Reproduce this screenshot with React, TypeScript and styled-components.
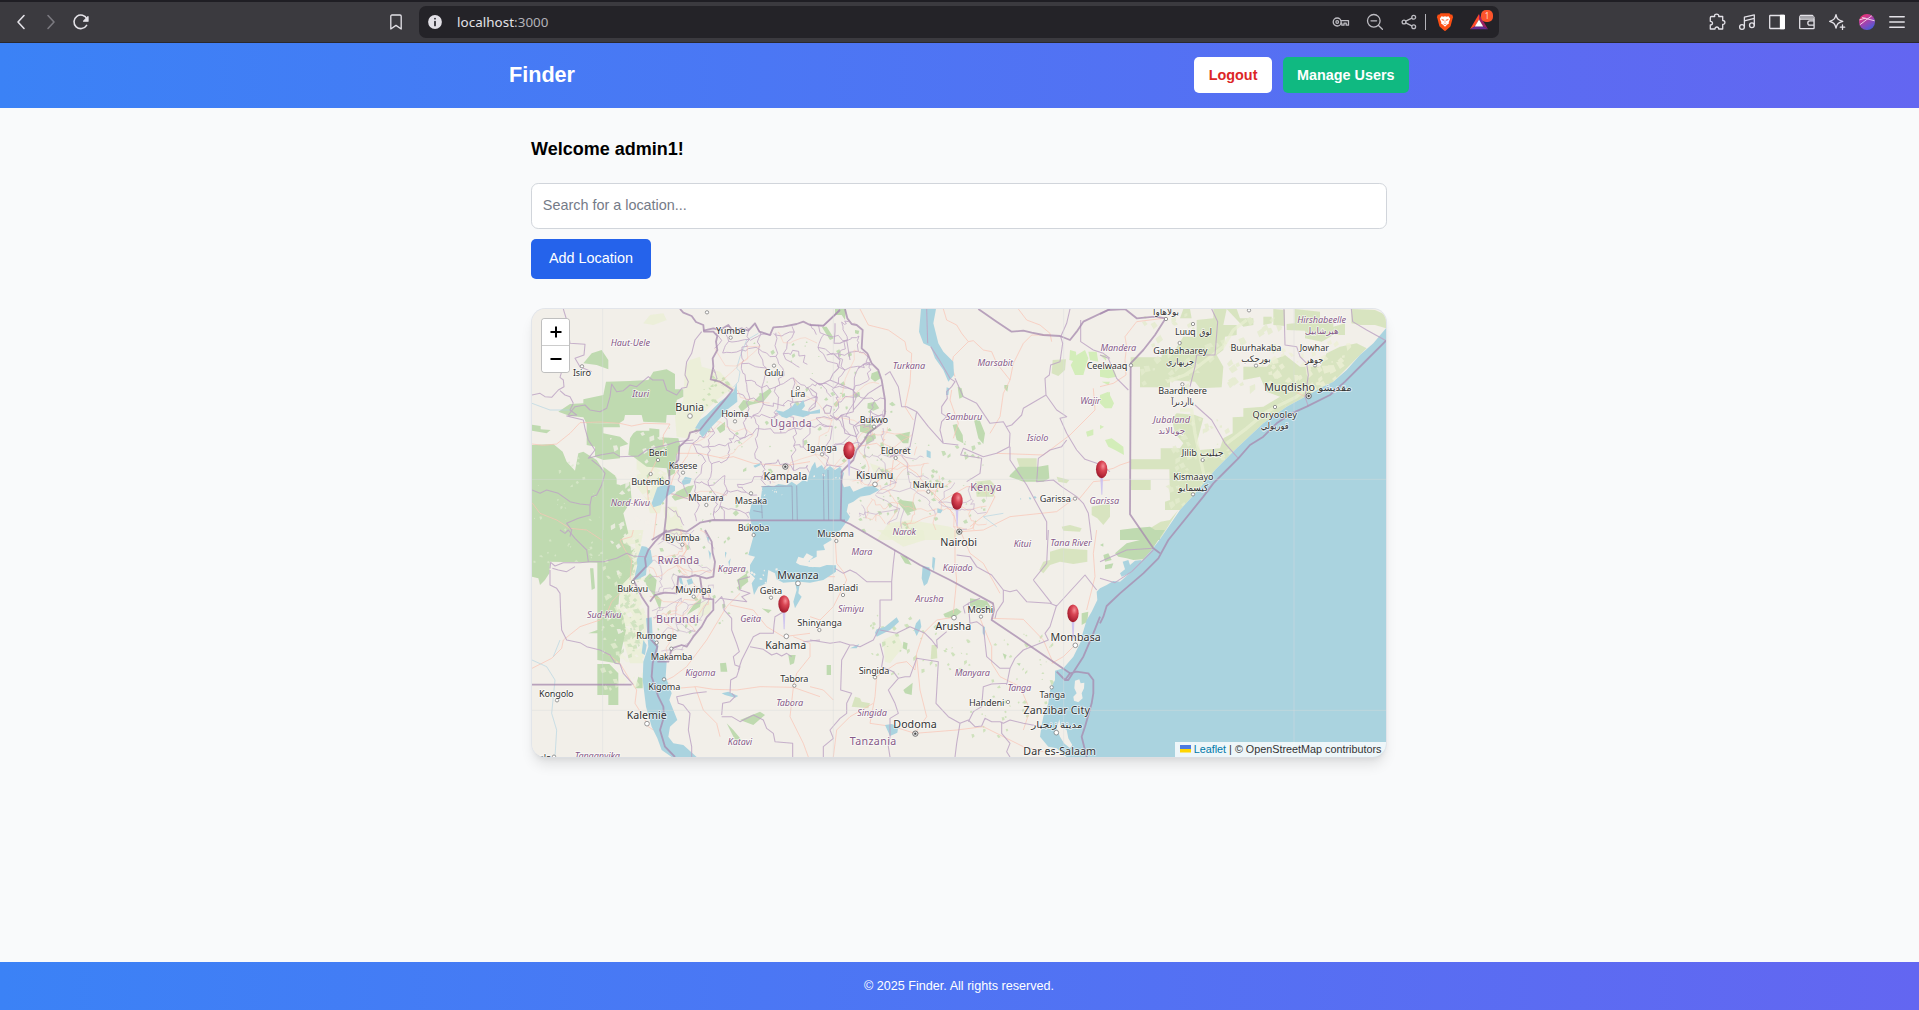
import React from 'react';
import styled, { createGlobalStyle } from 'styled-components';

const GlobalStyle = createGlobalStyle`
  * { box-sizing: border-box; }
  html, body { margin: 0; padding: 0; }
  body { background: #f9fafb; font-family: "Liberation Sans", Arial, sans-serif; font-size: 14.4px; color: #000; overflow: hidden; }
`;

const Screen = styled.div`
  display: flex;
  flex-direction: column;
  height: 100vh;
`;

/* ---------- browser bar ---------- */

const BrowserBar = styled.div`
  flex: none;
  height: 43px;
  display: flex;
  align-items: center;
  background: #3b3a3f;
  border-top: 2px solid #1f1e24;
  border-bottom: 1px solid #29282d;
  padding: 0 12px 0 11px;
`;
const IconGroup = styled.div<{ $width?: number; $end?: boolean }>`
  display: flex;
  align-items: center;
  gap: 10px;
  ${(p) => (p.$width ? `width: ${p.$width}px;` : 'flex: 1;')}
  justify-content: ${(p) => (p.$end ? 'flex-end' : 'flex-start')};
`;
const Glyph = styled.svg<{ $dim?: boolean }>`
  display: block;
  flex: none;
  width: 20px;
  height: 20px;
  fill: none;
  stroke: ${(p) => (p.$dim ? '#7b7a80' : '#e4e2e8')};
  stroke-width: 1.3;
  stroke-linecap: round;
  stroke-linejoin: round;
`;
const AddressBar = styled.div`
  display: flex;
  align-items: center;
  width: 1080px;
  height: 32px;
  margin-left: 13px;
  padding: 0 10px 0 6px;
  border-radius: 7px;
  background: #242328;
`;
const Address = styled.span`
  flex: 1;
  margin-left: 12px;
  font: 13.4px "Noto Sans", "Open Sans", sans-serif;
  letter-spacing: 0.05px;
  color: #e4e3e8;
`;
const Port = styled.span`
  color: #b3b2b8;
`;
const AddressActions = styled.div`
  display: flex;
  align-items: center;
  gap: 14px;
  svg { stroke: #bdbcc2; }
`;
const Divider = styled.span`
  width: 1px;
  height: 16px;
  margin: 0 -5px 0 -8px;
  background: #b4b3b9;
`;
const RewardsButton = styled.span`
  position: relative;
  display: flex;
`;
const RewardsBadge = styled.span`
  position: absolute;
  left: 12px;
  top: -2px;
  width: 12px;
  height: 12px;
  border-radius: 5px;
  background: #fb542b;
  color: #ffd9cc;
  font: 8px/12px "Noto Sans", sans-serif;
  text-align: center;
`;

/* ---------- page ---------- */

const Header = styled.header`
  flex: none;
  height: 65px;
  background: linear-gradient(to right, #3b82f6, #6366f1);
`;
const HeaderInner = styled.div`
  width: 901px;
  height: 100%;
  margin: 0 auto;
  padding: 0 1px 2px 0;
  display: flex;
  align-items: center;
  justify-content: space-between;
`;
const Brand = styled.h1`
  margin: 0;
  font-size: 21.6px;
  font-weight: 700;
  color: #fff;
`;
const HeaderActions = styled.div`
  display: flex;
  gap: 10.8px;
`;
const HeaderButton = styled.button<{ $primary?: boolean }>`
  height: 36px;
  padding: 0 14.4px;
  border: 0;
  border-radius: 5px;
  background: ${(p) => (p.$primary ? '#10b981' : '#fff')};
  color: ${(p) => (p.$primary ? '#fff' : '#dc2626')};
  font: 700 14.4px "Liberation Sans", Arial, sans-serif;
`;
const Main = styled.main`
  flex: 1;
  width: 901px;
  margin: 0 auto;
  padding: 28px 23px 0 22px;
`;
const Welcome = styled.h2`
  margin: 0 0 20px;
  font-size: 18px;
  line-height: 27px;
  font-weight: 700;
`;
const SearchInput = styled.input`
  display: block;
  width: 100%;
  height: 46px;
  padding: 0 10.8px 2px;
  border: 1px solid #d1d5db;
  border-radius: 7.2px;
  background: #fff;
  font: 14.4px "Liberation Sans", Arial, sans-serif;
  &::placeholder { color: #757b87; opacity: 1; }
`;
const AddButton = styled.button`
  display: block;
  width: 120px;
  height: 40px;
  margin: 10px 0 29px;
  padding: 0 0 2px;
  border: 0;
  border-radius: 5px;
  background: #2563eb;
  color: #fff;
  font: 14.4px "Liberation Sans", Arial, sans-serif;
`;
const MapCard = styled.section`
  position: relative;
  height: 450px;
  border: 1px solid #e2e5ea;
  border-bottom-color: #dcdee2;
  border-radius: 14.4px;
  overflow: hidden;
  background: #f2efe9;
  box-shadow: 0 9px 14px -3px rgba(0, 0, 0, 0.11), 0 3px 6px -3px rgba(0, 0, 0, 0.08);
`;
const MapCanvas = styled.svg`
  display: block;
  width: 100%;
  height: 100%;
`;
const ZoomControl = styled.div`
  position: absolute;
  left: 9px;
  top: 9px;
  width: 29px;
  border: 1px solid rgba(0, 0, 0, 0.25);
  border-radius: 4px;
  background: #fff;
  overflow: hidden;
`;
const ZoomButton = styled.button`
  display: block;
  width: 27px;
  height: 26px;
  padding: 0;
  border: 0;
  background: #fff;
  color: #000;
  & + & { border-top: 1px solid #ccc; height: 27px; }
  svg { display: block; margin: auto; stroke: #000; stroke-width: 2; fill: none; }
`;
const Attribution = styled.div`
  position: absolute;
  right: 0;
  bottom: 0;
  display: flex;
  align-items: center;
  height: 15px;
  padding: 0 4.5px 1px;
  background: rgba(255, 255, 255, 0.8);
  color: #333;
  font-size: 10.8px;
  white-space: pre;
  a { color: #0078a8; margin-left: 3px; }
  svg { display: block; }
`;
const Footer = styled.footer`
  flex: none;
  height: 48px;
  display: flex;
  align-items: center;
  justify-content: center;
  padding-right: 1px;
  background: linear-gradient(to right, #3b82f6, #6366f1);
  color: #fff;
  font-size: 12.6px;
`;

/* ---------- map data: six sheets, three units to a pixel ---------- */

type Sheet = 'A' | 'B' | 'C' | 'D' | 'E' | 'F';
const origin: Record<Sheet, [number, number]> = {
  A: [0, 0], B: [870, 0], C: [1740, 0], D: [0, 690], E: [870, 690], F: [1740, 690],
};
type Shape = [Sheet, string];

const forest: Shape[] = [
  ['A', 'M115,335 150,312 190,310 190,298 250,285 258,245 330,243 385,240 400,215 440,208 465,222 465,268 490,268 490,290 470,300 468,345 440,345 438,368 370,365 365,345 315,345 312,360 298,370 200,372 190,352 150,348Z'],
  ['A', 'M200,372 298,370 300,382 250,382 250,400 300,410 325,432 300,440 300,475 250,480 225,470 225,440 200,435Z'],
  ['A', 'M36,435 100,432 128,455 140,485 165,512 175,460 190,455 230,480 250,510 250,560 250,600 250,720 36,720Z'],
  ['A', 'M36,374 62,378 62,388 92,390 80,400 36,392Z M190,190 215,160 245,150 265,180 265,208 230,195Z'],
  ['A', 'M340,400 350,392 388,392 388,385 418,388 418,412 475,415 482,440 468,470 465,520 445,530 440,505 380,500 340,470 325,465 330,415Z'],
  ['A', 'M250,500 290,530 290,560 330,545 335,600 310,640 325,700 300,720 250,720Z M262,545 300,555 300,580 262,575Z'],
  ['A', 'M655,320 670,300 700,305 720,285 750,265 755,275 730,305 690,315 665,335Z M590,385 615,365 615,390 600,400Z M470,575 500,560 522,555 505,590 465,602 455,590Z'],
  ['D', 'M36,0 250,0 300,0 310,40 345,55 330,75 250,98 90,95 88,130 75,150 60,165 55,145 36,140Z'],
  ['D', 'M232,90 320,70 345,100 330,140 300,170 295,230 310,260 318,300 300,380 300,402 232,390 232,310 205,310 232,300Z'],
  ['D', 'M232,402 268,402 295,430 295,525 265,525 265,495 232,495Z M210,115 220,115 225,175 215,180Z M600,400 618,398 622,425 602,425Z M355,440 368,445 368,475 345,475Z'],
  ['D', 'M660,570 720,545 735,555 700,585Z M620,580 640,600 665,630 645,630Z M390,130 410,150 405,190 425,210 420,240 400,195 385,175 370,150Z M650,150 680,130 685,155 660,175Z M520,225 545,205 540,230 500,255Z M725,235 755,240 745,250Z M805,375 827,375 822,400 810,405Z'],
  ['B', 'M75,27 108,27 105,60 95,45 75,45Z M35,80 50,80 72,115 60,120Z M185,220 205,212 212,235 195,245 182,235Z M135,90 148,92 145,103 135,100Z M130,282 148,275 150,288 135,295Z M173,310 195,305 208,325 190,332 172,325Z M150,375 180,372 200,385 175,402 150,395Z M165,412 195,400 198,415 170,435Z'],
  ['B', 'M443,260 455,265 460,290 448,296Z M428,375 440,372 458,405 460,430 440,420Z M492,360 508,358 525,400 520,432 505,415Z M583,255 595,255 592,275 583,265Z M600,525 625,500 685,500 715,495 718,535 700,545 640,545 598,530Z M270,600 310,605 320,630 290,640 265,610Z M255,405 300,395 295,430 280,430Z'],
  ['E', 'M270,75 290,80 305,105 285,100Z M280,335 293,340 290,360 278,355Z M280,480 308,458 305,495 285,490Z M400,252 440,235 455,245 430,265 405,262Z M480,205 530,212 552,245 500,235 480,228Z M815,250 835,245 832,275 815,285Z M578,370 590,375 585,390Z M50,405 63,405 63,435 50,435Z M620,400 632,400 628,408Z'],
  ['F', 'M45,70 80,40 120,30 130,0 195,0 155,60 130,88 100,90 80,85 55,80Z M10,75 25,70 35,90 15,95Z M0,45 10,40 10,50Z M15,105 40,100 35,115 15,118Z'],
  ['C', 'M60,690 100,685 150,680 180,700 180,720 60,720Z'],
];

const savanna: Shape[] = [
  ['B', 'M728,180 768,178 765,210 745,228 725,220Z M620,475 680,475 680,510 630,505Z M740,530 778,540 770,550 745,545Z M845,620 900,610 900,650 880,675 862,655 845,645Z M755,680 780,675 815,685 810,695 760,692Z M495,545 540,540 560,560 550,590 500,590Z'],
  ['E', 'M720,65 755,55 832,60 832,95 790,102 750,95 720,105 700,130 688,120 700,95 720,90Z M135,500 150,505 155,515 180,520 175,535 125,530Z M365,345 380,345 382,385 362,388Z'],
  ['C', 'M92,172 185,172 185,150 225,150 250,110 290,110 290,60 340,55 340,27 380,27 370,75 410,75 410,105 375,110 370,150 350,165 370,200 365,262 300,265 285,245 210,240 210,262 120,262 120,200 92,200Z'],
  ['C', 'M215,355 230,340 285,345 310,355 290,430 300,450 360,445 370,415 398,400 398,352 430,350 430,325 490,320 540,290 560,320 490,370 410,445 345,510 290,575 240,630 195,630 195,605 210,600 208,508 92,508 92,478 182,478 182,445 240,445 250,430 225,400Z'],
  ['C', 'M250,27 270,27 275,55 240,55Z M380,27 410,27 420,55 460,55 460,75 430,80Z M520,27 555,30 555,78 520,75Z M490,50 515,50 515,70 490,75Z M584,27 660,35 660,62 700,62 700,80 735,70 735,105 700,105 665,125 615,115 615,92 560,90 560,72 584,70Z M754,27 825,30 858,45 858,85 825,75 780,75 754,70Z'],
  ['C', 'M430,200 500,200 520,180 555,165 600,200 660,200 680,160 720,140 770,130 800,145 700,245 625,285 560,320 540,290 500,275 480,230 430,240Z M92,540 152,540 152,570 92,570Z M182,665 210,660 235,630 180,718 60,718 60,690 150,685Z'],
];
const lime: Shape[] = [
  ['B', 'M780,150 798,155 800,185 778,180Z M800,165 825,150 835,175 820,225 795,225 782,195Z M835,155 860,155 865,185 840,180Z M870,165 890,165 888,182Z M875,245 900,245 895,255Z M870,300 900,275 900,315 885,322Z M828,395 850,388 850,405 832,410Z'],
  ['C', 'M0,285 25,275 42,310 35,325 15,325 0,310Z M15,420 35,415 70,440 72,465 45,450 25,440Z M0,205 40,205 50,230 25,235 0,230Z M0,375 12,380 0,388Z'],
];
const pale: Shape[] = [
  ['A', 'M510,180 540,170 545,200 600,215 640,262 590,300 545,345 525,385 500,415 470,410 465,350 490,300 495,200Z M390,45 430,40 440,60 400,75 370,70Z'],
  ['A', 'M350,470 400,500 440,520 430,590 420,640 390,640 380,600 350,560Z M430,620 470,620 500,720 440,720Z'],
  ['D', 'M290,0 370,0 360,60 340,150 380,260 370,400 330,400 300,300 300,150Z M540,215 575,215 570,250 530,265Z'],
  ['B', 'M235,670 300,660 420,680 450,700 430,720 200,720Z M180,490 240,510 260,540 200,540Z'],
  ['E', 'M200,0 340,0 345,30 280,50 240,25Z M220,330 260,310 280,350 240,400 225,395Z'],
];
const water: Shape[] = [
  ['A', 'M650,250 652,305 620,330 600,355 575,380 548,412 538,400 540,388 525,385 540,360 560,345 600,305 640,275Z'],
  ['A', 'M412,562 440,552 465,558 465,572 440,590 422,615 400,622 395,610Z M495,530 515,535 510,550 490,555 485,545Z M700,497 720,490 722,495 705,503Z'],
  ['A', 'M765,330 790,335 815,322 825,308 832,318 850,300 855,318 845,330 870,335 900,328 900,340 870,342 850,352 820,345 800,355 785,350Z'],
  ['A', 'M727,560 745,556 760,560 775,552 800,556 815,545 830,555 850,540 862,545 868,520 875,500 885,485 890,505 905,495 915,510 930,498 945,510 960,500 972,520 965,545 972,562 990,558 1000,575 1035,560 1060,558 1078,570 1050,585 1020,590 1000,605 985,612 980,635 990,650 985,660 975,672 962,690 945,700 930,705 935,720 910,735 915,750 890,752 890,770 870,780 865,800 900,802 920,795 948,796 948,815 925,830 910,840 870,848 840,845 835,880 845,890 825,925 820,905 830,870 825,845 790,848 770,838 765,820 745,810 740,850 715,860 702,885 695,850 705,835 690,820 690,795 705,770 685,765 700,710 688,640 695,610 722,600Z'],
  ['D', 'M365,48 378,50 392,60 398,95 380,115 378,135 360,145 342,150 352,105 350,90Z'],
  ['D', 'M378,265 395,262 398,320 415,345 412,375 440,395 437,440 455,490 448,510 472,570 450,590 445,620 460,640 490,645 530,681 455,681 425,660 412,625 395,590 378,530 368,450 370,395 385,350Z M605,490 625,485 655,498 645,503 615,495Z M365,370 370,330 380,345 375,375Z'],
  ['D', 'M475,140 485,145 490,165 480,160Z M500,150 515,145 520,160 505,165Z M565,60 573,70 570,90Z M560,20 568,22 565,35Z M615,65 620,68 615,85Z M625,95 632,85 628,110Z'],
  ['B', 'M333,27 378,27 370,70 385,130 400,155 430,185 432,225 415,245 400,210 375,175 362,140 340,130 327,95Z M410,262 418,265 415,285 408,285Z M350,450 362,455 362,475 350,470Z M382,625 398,630 392,640 382,638Z'],
  ['E', 'M338,108 358,112 362,130 352,160 342,168 335,145Z M195,308 200,298 225,290 260,262 267,275 240,300 200,320Z M318,280 330,266 334,290 320,318 312,300Z M225,585 245,582 265,590 262,608 240,618Z M120,355 148,342 140,355Z M518,290 525,290 525,320 518,310Z M368,80 376,85 372,125 366,110Z'],
  ['A', 'M2598,85 2560,130 2520,165 2480,210 2440,245 2400,265 2365,285 2300,320 2230,370 2150,445 2085,510 2030,575 1980,630 1920,718 1895,750 1868,780 1840,810 1800,845 1780,843 1760,855 1740,865 1730,875 1732,900 1715,935 1700,960 1688,1000 1685,1020 1670,1050 1660,1070 1630,1105 1605,1112 1605,1140 1590,1170 1585,1210 1570,1250 1565,1275 1560,1310 1585,1340 1610,1345 1640,1371 2598,1371Z'],
  ['F', 'M60,130 75,118 68,95 85,90 90,105 105,92 125,90 118,110 90,130 65,140Z'],
];
const islands: Shape[] = [
  ['E', 'M795,452 808,448 812,460 823,458 822,475 815,490 818,505 805,517 792,512 790,500 800,490 793,475Z M748,568 752,590 770,600 775,625 787,645 780,655 762,640 750,620 740,595Z'],
  ['D', 'M835,80 850,85 860,70 880,80 865,95 885,100 880,112 840,105 828,98Z'],
];
const frontiers: Shape[] = [
  ['A', 'M480,27 490,38 515,48 528,66 550,75 552,95 580,95 592,108 588,125 592,150 578,175 580,200 572,238 600,245 615,255 638,270 610,305 560,365 540,390 510,398 505,415 478,440 475,480 448,510 448,550 440,590 438,650 430,720'],
  ['A', 'M550,92 580,85 600,90 625,75 640,95 665,85 685,92 705,70 718,95 735,100 750,105 760,82 790,80 830,72 850,65 870,75 910,77 960,30'],
  ['B', 'M105,27 112,55 125,72 140,75 158,90 155,145 172,160 185,190 205,210 215,240 225,300 225,340 215,370 175,400 160,425 140,450 130,480 95,515 92,660 120,672 330,795 420,840 549,910 552,930 545,960 620,1010 780,1120'],
  ['A', 'M975,661 700,661 580,660 540,668 500,695 470,688 440,695 420,705 395,720'],
  ['B', 'M505,27 560,65 605,95 640,92 665,98 700,105 750,108 780,120 800,95 820,65 900,27'],
  ['C', 'M0,42 25,30 75,27 110,55 165,50 197,55 165,105 130,150 92,190 90,643 160,745 180,760'],
  ['C', 'M858,122 800,180 735,245 690,285 620,320 575,340 530,370 490,410 450,435 415,475 380,510 340,550 310,590 205,720 175,775 130,820 60,880 20,918 10,950 0,970'],
  ['E', 'M870,260 850,310 820,380 775,450 765,450 740,425 M765,450 780,430 800,425 835,430 850,450 850,490 845,520 825,590 815,620 830,681'],
  ['D', 'M440,0 405,35 385,60 375,85 378,110 340,150 350,170 365,200 385,230 385,320 412,350 398,400 395,440 415,500 430,530 432,560 420,600 435,650 465,681'],
  ['D', 'M555,0 575,35 578,70 585,95 580,140 560,145 540,140 525,135 505,142 475,140 470,190 435,188 405,195 390,215 M540,140 545,175 550,205 580,208 580,240 560,262 545,290 520,320 500,350 485,345 455,355 445,395 412,395'],
  ['D', 'M36,464 335,464'],
];
const districts: Shape[] = [
  ['A', 'M130,27 140,60 150,130 195,133 192,165 165,175 180,200 215,215 M36,285 60,280 75,290 95,292 115,270 132,260 130,240 120,232 125,215 130,190 M160,310 150,290 135,285 120,272 M160,310 150,330 170,345 140,348 190,360 195,385 205,420 225,450 205,475 240,465 280,458 300,470 355,468 380,450 415,440 440,435 470,425 520,420 M145,345 165,320 195,315 210,330 240,335 260,325 270,290 275,252 290,275 310,272 330,255 350,260 385,230 398,240 430,240 440,270 470,285 485,265 500,262 505,245 495,225 500,185 515,160 525,120 545,95 M36,570 60,580 80,570 115,580 150,605 180,612 210,615 215,590 230,585 245,555 255,520 240,500 215,480 M210,615 210,645 175,655 140,670 155,690 150,710'],
  ['D', 'M90,115 92,97 105,108 130,98 180,98 210,95 250,95 290,85 320,70 340,78 375,80 M90,120 90,165 110,175 120,190 122,250 125,300 140,330 180,338 200,350 240,360 270,375 285,400 300,402 310,430 340,464 M120,0 135,10 145,0 165,25 180,40 200,60 205,95 M97,115 115,120 140,125 165,110'],
  ['D', 'M585,220 605,200 612,215 612,240 635,265 635,300 650,340 658,365 640,380 645,405 660,410 650,440 632,450 630,490 M605,560 635,560 660,575 700,555 730,570 740,595 760,610 765,635 818,640 818,681 M560,485 520,490 470,500 475,520 490,525 510,550 505,600 515,650 515,681 M635,490 645,500 630,515 608,520 605,555 M690,350 730,358 755,375 770,370 785,378 800,370 815,380 M655,420 665,390 685,350 700,320 720,310 760,310 762,285 765,260 800,240 M690,140 655,150 660,180 690,190 665,200 680,215 600,205 M850,335 900,330'],
  ['B', 'M435,235 460,290 500,310 540,370 580,365 600,400 598,440 560,460 520,470 460,445 452,465 515,475 510,520 470,545 M600,440 600,480 650,555 710,665 710,720 M588,380 605,375 635,345 640,325 708,285 M752,110 758,130 750,185 722,195 718,225 705,235 708,285 740,330 770,350 750,355 770,400 800,450 825,478 860,490 900,515 M770,420 755,440 720,450 685,475 682,520 680,545 730,540 755,560 800,590 820,610 835,640 840,680 845,720 M362,140 385,175 420,235 435,245 425,260 410,275 412,295 395,320 395,340 410,350 395,365 390,390 400,430 M320,335 355,380 400,430 M225,225 240,215 265,260 275,320 290,320 320,335 310,390 300,440 240,470 M780,27 770,70 752,110 M812,60 812,125 850,150 880,160 900,175 M400,430 445,435 M120,500 145,510 160,520 155,545 M350,27 353,130'],
  ['B', 'M0,75 40,78 75,45 90,27 M75,70 75,95 72,130 90,130 110,120 120,180 M50,165 70,160 90,180 85,205 70,220 60,240 30,255 0,235 M60,240 130,270 130,335 M130,335 95,345 80,360 60,345 M130,330 175,280 215,255 M145,205 165,190 185,195 M0,265 20,280 15,320 0,330 M40,325 50,315 65,320 60,340 45,340Z M95,345 105,400 140,410 130,380 155,360 215,345'],
  ['C', 'M0,165 25,175 50,235 85,270 M335,27 353,65 345,165 290,165 285,200 270,260 M285,315 335,360 375,430 415,475 M552,27 555,135 590,140 600,170 620,190 625,225 620,260 615,290 625,320 M754,27 758,65 800,90 858,122'],
  ['E', 'M255,60 250,100 245,155 170,155 140,130 120,120 100,130 75,115 M245,155 245,210 210,210 210,290 190,330 150,350 130,345 120,345 90,335 60,340 0,330 M120,345 95,390 92,480 125,490 110,520 110,550 90,565 60,600 70,625 40,650 40,681 M210,340 220,380 215,410 250,425 265,445 285,440 300,440 320,385 385,395 378,520 415,560 450,580 440,640 435,681 M265,445 235,480 255,520 265,550 240,565 240,620 235,650 240,681 M450,580 475,570 495,590 515,588 525,565 545,575 570,575 580,580 600,570 640,580 695,590 M465,250 460,230 475,220 510,205 M475,220 480,280 500,275 520,290 530,380 570,415 600,415 615,385 640,360 715,330 705,310 720,290 740,225 M600,415 590,465 M580,180 600,185 620,180 650,215 720,220 740,228 825,135 860,180 M670,150 710,100 715,0 M670,150 725,220 M440,75 480,80 500,110 545,135 580,180 580,215 560,245 555,265 M382,355 380,330 410,305 M210,300 260,310 300,290 345,310 365,330 380,350 M475,575 490,545 515,530 520,470 545,462 590,460 M575,575 575,610 600,640 590,665 600,681'],
  ['F', 'M0,95 80,60 160,55 M0,145 45,158 95,125 160,60'],
];
const roads: Shape[] = [
  ['A', 'M36,432 70,436 110,432 150,400 180,368 240,366 300,370 335,378 375,370 450,372 430,405 430,440 M36,608 60,640 110,660 150,685 200,690 245,720 M470,460 540,460 610,475 640,470 700,490 790,498 870,485 M410,480 380,545 385,600 410,640 400,720 M500,470 460,530 445,580'],
  ['B', 'M150,27 175,75 235,90 285,125 290,150 305,160 300,250 285,320 310,360 M400,27 410,60 440,75 455,100 475,125 490,122 520,150 545,155 560,190 600,240 580,280 570,350 540,400 M435,230 425,200 430,170 475,125 M625,27 650,60 690,75 720,100 725,125 M600,240 610,190 640,130 665,105 720,105 M430,415 445,370 420,300 425,270 M560,460 700,465 780,405 810,375 855,330 850,265 M140,440 200,430 225,450 260,480 320,520 350,560 380,590 430,640 445,690 M450,695 520,690 600,650 740,635 800,590 M140,440 120,470 100,490 80,500 60,520 M850,545 805,600 M850,545 900,540 M130,590 200,545 270,490 M250,480 240,560 M400,600 470,560 520,560 555,590 530,640 480,680'],
  ['C', 'M75,180 80,140 75,110 110,65 190,55 M75,180 78,225 40,250 0,260 M590,278 640,300 M0,515 40,505 60,495 90,485'],
  ['D', 'M36,415 95,385 125,355 130,330 180,290 240,270 265,240 275,215 300,190 340,165 M340,0 335,20 300,30 315,60 335,90 330,150 M260,370 300,400 330,450 350,480 345,520 370,560 385,590 400,600 M440,450 460,440 500,410 560,330 620,230 660,190 M430,450 470,475 530,470 580,478 650,480 720,470 820,472 900,500 M820,472 810,560 850,640 865,681 M820,470 830,430 870,380 870,340 820,320 M525,470 550,540 590,580 600,620 M630,225 700,240 740,290 790,320 870,310 M480,0 500,60 470,100 500,130'],
  ['E', 'M75,15 80,100 100,125 110,150 70,230 30,270 0,260 M435,0 435,100 440,150 430,250 M430,262 380,270 340,310 320,370 315,420 290,395 260,400 200,440 195,500 180,580 250,590 315,610 440,600 520,590 640,650 700,665 M320,380 330,480 350,560 315,610 M190,520 120,560 80,600 70,681 M510,265 545,350 545,400 570,440 630,470 660,540 640,600 M545,265 640,268 700,330 730,400 M450,0 480,70 520,100 570,190 M795,345 760,380 725,400 M860,0 850,70 855,140 830,240 M0,470 40,480 70,510 M0,140 75,140'],
];
const streams: Shape[] = [
  ['A', 'M715,100 680,120 660,170 650,205 660,215 655,245 640,262 M36,310 90,330 150,330'],
  ['D', 'M36,390 80,410 105,450 95,550 110,600 105,681 M100,380 120,330'],
  ['B', 'M560,680 520,650 580,640'],
];

/* Small deterministic generator used for the fine district mesh and vegetation specks. */
const seeded = (seed: number) => () => {
  seed = (seed * 16807) % 2147483647;
  return seed / 2147483647;
};
function mesh(x: number, y: number, w: number, h: number, step: number, seed: number, skip = 0.25) {
  const rnd = seeded(seed);
  const cols = Math.ceil(w / step);
  const rows = Math.ceil(h / step);
  const pts: number[][][] = [];
  for (let r = 0; r <= rows; r++) {
    pts.push([]);
    for (let c = 0; c <= cols; c++) {
      const stagger = r % 2 ? step / 2 : 0;
      pts[r].push([x + stagger + c * step + (rnd() - 0.5) * step * 0.8, y + r * step + (rnd() - 0.5) * step * 0.8]);
    }
  }
  let d = '';
  const join = (a: number[], b: number[]) => {
    if (rnd() < skip) return;
    d += `M${a[0].toFixed(0)},${a[1].toFixed(0)}`;
    for (let t = 1; t < 4; t++) {
      const px = a[0] + ((b[0] - a[0]) * t) / 4 + (rnd() - 0.5) * step * 0.3;
      const py = a[1] + ((b[1] - a[1]) * t) / 4 + (rnd() - 0.5) * step * 0.3;
      d += ` ${px.toFixed(0)},${py.toFixed(0)}`;
    }
    d += ` ${b[0].toFixed(0)},${b[1].toFixed(0)}`;
  };
  for (let r = 0; r <= rows; r++) {
    for (let c = 0; c <= cols; c++) {
      if (c < cols) join(pts[r][c], pts[r][c + 1]);
      if (r < rows) join(pts[r][c], pts[r + 1][c]);
    }
  }
  return d;
}
function specks(x: number, y: number, w: number, h: number, n: number, size: number, seed: number) {
  const rnd = seeded(seed);
  let d = '';
  for (let i = 0; i < n; i++) {
    const cx = x + rnd() * w;
    const cy = y + rnd() * h;
    const s = size * (0.3 + rnd());
    d += `M${cx.toFixed(0)},${cy.toFixed(0)}l${s.toFixed(0)},${(-s * rnd()).toFixed(0)} ${(s * rnd()).toFixed(0)},${s.toFixed(0)} ${(-s).toFixed(0)},${(s * rnd()).toFixed(0)}z`;
  }
  return d;
}

type Kind = 'town' | 'city' | 'region' | 'country' | 'arabic' | 'regionArabic';
type Label = [Sheet, Kind, string, number, number, number];
const labels: Label[] = [
  ['A', 'town', 'Yumbe', 632, 102, 88], ['A', 'region', 'Haut-Uele', 331, 138, 118], ['A', 'town', 'Isiro', 186, 227, 54],
  ['A', 'region', 'Ituri', 362, 290, 51], ['A', 'city', 'Bunia', 509, 333, 86], ['A', 'town', 'Gulu', 762, 229, 58],
  ['A', 'town', 'Lira', 834, 292, 45], ['A', 'town', 'Hoima', 645, 352, 83], ['A', 'country', 'Uganda', 813, 382, 124],
  ['A', 'town', 'Beni', 414, 467, 55], ['A', 'town', 'Kasese', 489, 506, 86], ['A', 'town', 'Butembo', 392, 555, 116],
  ['A', 'city', 'Kampala', 796, 541, 131], ['A', 'region', 'Nord-Kivu', 331, 617, 118], ['A', 'town', 'Mbarara', 558, 604, 106],
  ['A', 'town', 'Masaka', 693, 611, 97], ['A', 'town', 'Bukoba', 701, 692, 95], ['B', 'town', 'Iganga', 36, 452, 90],
  ['B', 'region', 'Turkana', 297, 208, 97], ['B', 'region', 'Marsabit', 556, 197, 107], ['B', 'town', 'Bukwo', 192, 369, 85],
  ['B', 'region', 'Samburu', 462, 359, 110], ['B', 'region', 'Isiolo', 683, 424, 64], ['B', 'town', 'Eldoret', 257, 463, 90],
  ['B', 'city', 'Kisumu', 194, 537, 112], ['B', 'town', 'Nakuru', 355, 563, 94], ['B', 'country', 'Kenya', 528, 573, 95],
  ['B', 'town', 'Garissa', 736, 605, 93], ['B', 'region', 'Garissa', 883, 613, 89], ['B', 'region', 'Wajir', 841, 312, 61],
  ['B', 'region', 'Narok', 283, 705, 71], ['B', 'town', 'Musoma', 77, 712, 110], ['B', 'town', 'Ceelwaaq', 891, 206, 122],
  ['B', 'region', 'Mandera', 925, 152, 107],
  ['C', 'arabic', 'بولاهاوا', 198, 46, 78], ['C', 'town', 'Luuq', 256, 104, 62], ['C', 'arabic', 'لوق', 317, 104, 38],
  ['C', 'town', 'Garbahaarey', 241, 162, 163], ['C', 'arabic', 'جربهاري', 240, 194, 84],
  ['C', 'town', 'Buurhakaba', 468, 152, 153], ['C', 'arabic', 'بورحكب', 468, 187, 88],
  ['C', 'town', 'Jowhar', 643, 154, 88], ['C', 'arabic', 'جوهر', 643, 188, 54],
  ['C', 'region', 'Hirshabeelle', 665, 68, 147], ['C', 'regionArabic', 'هيرشابيل', 665, 102, 102],
  ['C', 'city', 'Muqdisho', 569, 272, 152], ['C', 'arabic', 'مقديشو', 705, 272, 101],
  ['C', 'town', 'Baardheere', 248, 283, 146], ['C', 'arabic', 'بااَردىرآ', 248, 315, 68],
  ['C', 'region', 'Jubaland', 215, 369, 110], ['C', 'regionArabic', 'جوبالاند', 215, 401, 80],
  ['C', 'town', 'Qoryooley', 524, 354, 133], ['C', 'arabic', 'قوريولي', 524, 387, 84],
  ['C', 'town', 'Jilib', 268, 467, 45], ['C', 'arabic', 'جيليب', 335, 467, 72],
  ['C', 'town', 'Kismaayo', 280, 540, 121], ['C', 'arabic', 'كيسمايو', 280, 573, 90],
  ['D', 'town', 'Byumba', 487, 33, 104], ['D', 'country', 'Rwanda', 475, 101, 125], ['D', 'region', 'Kagera', 635, 127, 84],
  ['D', 'town', 'Bukavu', 338, 187, 93], ['D', 'town', 'Muyinga', 520, 188, 109], ['D', 'town', 'Geita', 753, 191, 67],
  ['D', 'city', 'Mwanza', 834, 146, 124], ['D', 'region', 'Sud-Kivu', 253, 265, 104], ['D', 'country', 'Burundi', 472, 278, 128],
  ['D', 'region', 'Geita', 692, 277, 62], ['D', 'town', 'Rumonge', 410, 327, 122], ['D', 'city', 'Kahama', 797, 357, 123],
  ['D', 'town', 'Makamba', 455, 389, 125], ['D', 'region', 'Kigoma', 541, 437, 90], ['D', 'town', 'Kigoma', 433, 480, 96],
  ['D', 'town', 'Tabora', 823, 455, 85], ['D', 'region', 'Tabora', 809, 527, 81], ['D', 'town', 'Kongolo', 109, 501, 104],
  ['D', 'city', 'Kalemie', 380, 568, 120], ['D', 'region', 'Katavi', 660, 644, 73], ['D', 'region', 'Tanganyika', 232, 687, 136],
  ['D', 'town', 'Kabalo', 52, 694, 84],
  ['E', 'region', 'Mara', 156, 76, 63], ['E', 'town', 'Bariadi', 99, 183, 90], ['E', 'region', 'Simiyu', 123, 245, 78],
  ['E', 'town', 'Shinyanga', 29, 288, 134], ['E', 'city', 'Nairobi', 446, 48, 110], ['E', 'region', 'Kajiado', 443, 123, 90],
  ['E', 'region', 'Kitui', 637, 50, 52], ['E', 'region', 'Tana River', 783, 47, 124], ['E', 'region', 'Arusha', 358, 217, 84],
  ['E', 'town', 'Moshi', 511, 249, 77], ['E', 'city', 'Arusha', 430, 300, 107], ['E', 'city', 'Mombasa', 797, 334, 151],
  ['E', 'town', 'Singida', 192, 431, 92], ['E', 'region', 'Manyara', 487, 438, 106], ['E', 'region', 'Tanga', 628, 482, 71],
  ['E', 'town', 'Tanga', 727, 504, 77], ['E', 'town', 'Handeni', 530, 527, 106], ['E', 'region', 'Singida', 186, 558, 89],
  ['E', 'city', 'Dodoma', 315, 594, 130], ['E', 'country', 'Tanzania', 189, 645, 140], ['E', 'city', 'Zanzibar City', 740, 553, 199],
  ['E', 'arabic', 'مدينة زنجبار', 741, 595, 154], ['E', 'city', 'Dar es-Salaam', 749, 675, 218],
];
const dots: [Sheet, number, number, number][] = [
  ['A', 561, 37, 5], ['A', 632, 113, 5], ['A', 186, 199, 5], ['A', 510, 348, 7], ['A', 762, 197, 5], ['A', 834, 264, 5],
  ['A', 645, 364, 5], ['A', 414, 480, 5], ['A', 489, 518, 5], ['A', 392, 522, 5], ['A', 559, 615, 5], ['A', 693, 580, 5],
  ['A', 701, 705, 5], ['B', 36, 463, 5], ['B', 192, 380, 5], ['B', 257, 474, 5], ['B', 195, 553, 7], ['B', 355, 575, 5],
  ['B', 795, 596, 5], ['B', 79, 723, 5], ['C', 93, 196, 5], ['C', 198, 57, 5], ['C', 279, 72, 5], ['C', 239, 129, 5], ['C', 447, 31, 5],
  ['C', 468, 197, 5], ['C', 645, 196, 5], ['C', 247, 253, 5], ['C', 525, 321, 5], ['C', 308, 480, 5], ['C', 279, 583, 5],
  ['D', 487, 44, 5], ['D', 339, 156, 5], ['D', 521, 200, 5], ['D', 753, 203, 5], ['D', 834, 160, 7], ['D', 799, 319, 7],
  ['D', 410, 338, 5], ['D', 454, 356, 5], ['D', 432, 448, 5], ['D', 823, 467, 5], ['D', 111, 511, 5], ['D', 381, 581, 7],
  ['D', 102, 680, 5], ['E', 99, 195, 5], ['E', 28, 300, 5], ['E', 432, 263, 7], ['E', 513, 260, 5], ['E', 796, 346, 7], ['E', 195, 442, 5],
  ['E', 725, 472, 5], ['E', 594, 516, 5], ['E', 739, 608, 7],
];
const capitals: [Sheet, number, number][] = [['A', 796, 500], ['B', 448, 695], ['C', 626, 288], ['E', 316, 611]];
const markers: [number, number][] = [[987, 451], [1311, 603], [1745, 508], [792, 912], [1659, 940]];

const Area = styled.path<{ $fill: string; $alpha?: number }>`
  fill: ${(p) => p.$fill};
  opacity: ${(p) => p.$alpha ?? 1};
`;
const Line = styled.path<{ $color: string; $w: number; $alpha?: number }>`
  fill: none;
  stroke: ${(p) => p.$color};
  stroke-width: ${(p) => p.$w};
  stroke-linejoin: round;
  opacity: ${(p) => p.$alpha ?? 1};
`;
const fontSizes: Record<Kind, number> = { town: 27.5, city: 32, region: 27.5, country: 32, arabic: 27, regionArabic: 26 };
const PlaceName = styled.text<{ $kind: Kind }>`
  font-family: "Noto Sans", "DejaVu Sans", sans-serif;
  font-size: ${(p) => fontSizes[p.$kind]}px;
  font-style: ${(p) => (p.$kind === 'region' ? 'italic' : 'normal')};
  fill: ${(p) => (p.$kind === 'region' || p.$kind === 'country' || p.$kind === 'regionArabic' ? '#865a89' : '#333')};
  stroke: rgba(255, 255, 255, 0.65);
  stroke-width: 5px;
  stroke-linejoin: round;
  paint-order: stroke;
  text-anchor: middle;
`;

const shift = (s: Sheet) => `translate(${origin[s][0]} ${origin[s][1]})`;
const Areas = ({ items, fill, alpha }: { items: Shape[]; fill: string; alpha?: number }) => (
  <>{items.map(([s, d], i) => <Area key={i} transform={shift(s)} d={d} $fill={fill} $alpha={alpha} />)}</>
);
const Lines = ({ items, color, w, alpha }: { items: Shape[]; color: string; w: number; alpha?: number }) => (
  <>{items.map(([s, d], i) => <Line key={i} transform={shift(s)} d={d} $color={color} $w={w} $alpha={alpha} />)}</>
);

const EastAfricaMap = () => (
  <MapCanvas viewBox="36 27 2562 1344" preserveAspectRatio="none">
    <defs>
      <radialGradient id="balloon" cx="0.62" cy="0.32" r="0.75">
        <stop offset="0" stopColor="#f58f97" />
        <stop offset="0.35" stopColor="#d94654" />
        <stop offset="0.8" stopColor="#ae2234" />
        <stop offset="1" stopColor="#8d1a28" />
      </radialGradient>
      <clipPath id="uganda">
        <path d="M588,100 705,75 750,105 850,65 910,77 975,35 1025,90 1055,190 1095,300 1085,370 1010,450 965,500 860,520 720,560 690,655 540,660 450,690 440,590 475,440 540,390 650,280 575,240Z" />
      </clipPath>
      <clipPath id="rwandaBurundi">
        <path d="M440,690 555,690 585,750 580,900 500,1040 445,1085 415,1040 390,900 385,780Z" />
      </clipPath>
      <clipPath id="westKenya">
        <path d="M1060,390 1160,370 1200,460 1270,540 1400,570 1400,690 1280,690 1160,690 985,640 1060,590 1078,570 985,540 990,450Z" />
      </clipPath>
    </defs>
    <rect x="36" y="27" width="2562" height="1344" fill="#f2efe9" />
    <Areas items={pale} fill="#e9efd3" alpha={0.75} />
    <Areas items={savanna} fill="#d4e2b9" alpha={0.85} />
    <Areas items={lime} fill="#d3edb9" />
    <Areas items={forest} fill="#bfdab0" />
    <Area d={specks(270, 400, 180, 720, 110, 11, 11)} $fill="#f2efe9" $alpha={0.8} />
    <Area d={specks(240, 780, 130, 400, 60, 11, 29)} $fill="#eef1db" $alpha={0.6} />
    <Area d={specks(300, 720, 60, 350, 70, 11, 37)} $fill="#bfdab0" $alpha={0.6} />
    <Area d={specks(40, 470, 200, 340, 40, 6, 83)} $fill="#dce9cd" $alpha={0.7} />
    <Area d={specks(380, 380, 300, 620, 70, 8, 17)} $fill="#bfdab0" $alpha={0.9} />
    <Area d={specks(545, 220, 80, 120, 24, 8, 43)} $fill="#c9dfb5" $alpha={0.9} />
    <Area d={specks(700, 120, 420, 400, 46, 8, 23)} $fill="#bfdab0" $alpha={0.9} />
    <Area d={specks(1000, 420, 400, 270, 100, 8, 31)} $fill="#bfdab0" $alpha={0.85} />
    <Area d={specks(1050, 940, 300, 200, 50, 8, 47)} $fill="#c9dfb5" $alpha={0.85} />
    <Area d={specks(1350, 1000, 250, 330, 45, 7, 51)} $fill="#c9dfb5" $alpha={0.85} />
    <Area d={specks(1860, 40, 420, 220, 60, 13, 59)} $fill="#e3ebcd" $alpha={0.8} />
    <Area d={specks(1930, 350, 200, 270, 60, 12, 61)} $fill="#e3ebcd" $alpha={0.8} />
    <Area d={specks(2240, 120, 240, 160, 50, 14, 67)} $fill="#ecefd4" $alpha={0.8} />
    <Lines items={[['C', 'M200,245 255,225 300,195 370,140 400,90 440,60 M240,330 275,330 285,400 300,470 315,540 M380,430 440,385 500,335 590,290 640,250']]} color="#e9efd3" w={10} alpha={0.7} />
    <Lines items={roads} color="#fac4b5" w={2.4} alpha={0.9} />
    <g clipPath="url(#westKenya)">
      <Line d={mesh(960, 340, 500, 360, 54, 7, 0.35)} $color="#fac4b5" $w={2.2} $alpha={0.8} />
      <Line d={mesh(960, 340, 500, 360, 62, 91, 0.3)} $color="#c5aecb" $w={2.4} $alpha={0.8} />
    </g>
    <Lines items={streams} color="#b3d5e2" w={2.5} alpha={0.8} />
    <g clipPath="url(#uganda)">
      <Line d={mesh(420, 60, 680, 620, 48, 5)} $color="#c3aac9" $w={3} $alpha={0.85} />
      <Line d={mesh(420, 60, 680, 620, 110, 57, 0.4)} $color="#fac4b5" $w={2} $alpha={0.7} />
    </g>
    <g clipPath="url(#rwandaBurundi)">
      <Line d={mesh(360, 690, 250, 400, 44, 13, 0.35)} $color="#c5aecb" $w={2.4} $alpha={0.75} />
      <Line d={mesh(360, 690, 250, 400, 66, 19, 0.35)} $color="#fac4b5" $w={2.2} $alpha={0.8} />
    </g>
    <Areas items={water} fill="#aad3df" />
    <Areas items={islands} fill="#f2efe9" />
    <Area d={specks(690, 800, 120, 50, 9, 6, 71)} $fill="#f2efe9" />
    <Area d={specks(725, 568, 60, 26, 9, 5, 77)} $fill="#f2efe9" />
    <Area d={specks(880, 515, 90, 30, 7, 5, 79)} $fill="#f2efe9" />
    <Area d={specks(1500, 560, 60, 60, 3, 4, 73)} $fill="#aad3df" />
    <Lines items={[['A', 'M727,655 724,598 M724,560 816,558 818,661 M832,661 830,557 M910,520 912,661 M924,510 926,661 M727,637 700,632']]} color="#9ba3bd" w={3} alpha={0.8} />
    <Lines items={districts} color="#bda5c4" w={3.2} alpha={0.85} />
    <Lines items={frontiers} color="#a88cb0" w={5.5} alpha={0.78} />
    <Line d="M248,27V1371 M940,27V1371 M1631,27V1371 M2322,27V1371 M36,538H2598 M36,1231H2598" $color="#d9dadd" $w={2.4} $alpha={0.55} />
    {dots.map(([s, x, y, r], i) => (
      <circle key={i} transform={shift(s)} cx={x} cy={y} r={r} fill="#fff" stroke="#777" strokeWidth="2.2" />
    ))}
    {capitals.map(([s, x, y], i) => (
      <g key={i} transform={shift(s)}>
        <circle cx={x} cy={y} r="8" fill="#eee" stroke="#555" strokeWidth="2.4" />
        <circle cx={x} cy={y} r="3.5" fill="#444" />
      </g>
    ))}
    {labels.map(([s, kind, name, x, y, w], i) => (
      <PlaceName key={i} $kind={kind} x={x + origin[s][0]} y={y + origin[s][1]} textLength={w} lengthAdjust={kind === 'arabic' || kind === 'regionArabic' ? 'spacingAndGlyphs' : 'spacing'}>
        {name}
      </PlaceName>
    ))}
    {markers.map(([x, y], i) => (
      <g key={i}>
        <path d={`M${x - 4},${y + 26}h8l-2,50h-3z`} fill="#c9bdf0" opacity="0.85" />
        <ellipse cx={x} cy={y} rx="17" ry="26.5" fill="url(#balloon)" />
      </g>
    ))}
  </MapCanvas>
);

const Chrome = () => (
  <BrowserBar>
    <IconGroup $width={375}>
      <Glyph viewBox="0 0 20 20"><path strokeWidth="1.6" d="M13 3.5 7 10l6 6.5" /></Glyph>
      <Glyph viewBox="0 0 20 20" $dim><path strokeWidth="1.6" d="m7 3.5 6 6.5-6 6.5" /></Glyph>
      <Glyph viewBox="0 0 20 20"><path strokeWidth="1.6" d="M15.6 13.4A6.8 6.8 0 1 1 16 7" /><path d="M17 4.6v4.6h-4.4Z" fill="#e4e2e8" /></Glyph>
    </IconGroup>
    <Glyph viewBox="0 0 20 20"><path d="M4.8 4.2c0-.7.5-1.2 1.2-1.2h8c.7 0 1.2.5 1.2 1.2V17L10 13.4 4.8 17Z" /></Glyph>
    <AddressBar>
      <Glyph viewBox="0 0 20 20"><circle cx="10" cy="10" r="6.9" fill="#e2e0e6" stroke="none" /><path d="M10 9.5v4M10 6.5v.2" stroke="#242328" strokeWidth="1.7" /></Glyph>
      <Address>localhost<Port>:3000</Port></Address>
      <AddressActions>
        <Glyph viewBox="0 0 20 20"><circle cx="6.2" cy="10" r="4" /><circle cx="6.2" cy="10" r="1.3" /><path d="M9.9 8.6H17.5v4.6h-2.3v-2H13v2h-2.2v-2h-.9" /></Glyph>
        <Glyph viewBox="0 0 20 20"><circle cx="8.8" cy="8.8" r="6.3" /><path d="M6 8.8h5.6M13.5 13.5 17.4 17.3" /></Glyph>
        <Glyph viewBox="0 0 20 20"><circle cx="5" cy="10" r="1.9" /><circle cx="14.7" cy="5.3" r="1.9" /><circle cx="14.7" cy="14.7" r="1.9" /><path d="m6.8 9.2 6-3M6.8 10.800l6 3" /></Glyph>
        <Divider />
        <Glyph viewBox="0 0 20 20">
          <path d="M5.6 1.200h8.800l1.500 1.600 1.300-.2.9 2.700-.5 1.200-1.900 7.200c-.2.8-.7 1.400-1.400 1.900L10.600 18.700a1 1 0 0 1-1.200 0l-3.700-3.100c-.7-.5-1.200-1.100-1.400-1.900L2.400 6.500l-.5-1.200.9-2.700 1.300.2Z" fill="#fb4f14" stroke="none" />
          <path d="m6.500 4.300 2 .4L10 4.300l1.500.4 2-.4 1.700 2.500-1.500 3.400.2 1.200L12 12.800l-2 1.900-2-1.900-1.900-1.400.2-1.200-1.500-3.400Z" fill="#fff" stroke="none" />
          <path d="m7 7.300 1.800.6-.5.600ZM13 7.300l-1.800.6.5.600ZM10 8.500v2M8.800 12l1.200.6 1.200-.6" fill="#fb4f14" stroke="#fb4f14" strokeWidth="0.5" />
        </Glyph>
        <RewardsButton>
          <Glyph viewBox="0 0 20 20">
            <path d="M10 2 1 17.300l5-2.700 4-7Z" fill="#ff4b2b" stroke="none" />
            <path d="M10 2l9 15.300-5-2.700-4-7Z" fill="#9e1f63" stroke="none" />
            <path d="M1 17.300h18l-5-3H6Z" fill="#662d91" stroke="none" />
            <path d="m10 7.600 4.200 6.800H5.800Z" fill="#fff" stroke="none" />
          </Glyph>
          <RewardsBadge>1</RewardsBadge>
        </RewardsButton>
      </AddressActions>
    </AddressBar>
    <IconGroup $end>
      <Glyph viewBox="0 0 20 20"><path d="M4.500 4.500h3.200c-.5-2 .8-2.300 2-2.300s2.500.5 2 2.300h4v4c2 .0 2.200 1 2.200 2s-.7 2-2.200 1.800V17h-4c0-1.500-.8-2-1.800-2s-1.900.5-1.900 2H3.300v-4c1.600 0 2.200-.8 2.200-1.800s-.7-1.900-2.200-1.900V5.700c0-.7.500-1.200 1.200-1.200Z" /></Glyph>
      <Glyph viewBox="0 0 20 20"><circle cx="5" cy="15" r="2.4" /><circle cx="14.900" cy="13.200" r="2.4" /><path d="M7.400 15V5.200l9.900-2.400v10.400M7.400 8.800l9.900-2.400" /></Glyph>
      <Glyph viewBox="0 0 20 20"><rect x="2.7" y="3.5" width="14.6" height="13" rx=".5" /><path d="M13.500 3.500h3.800v13h-3.800Z" fill="#fff" stroke="#fff" /></Glyph>
      <Glyph viewBox="0 0 20 20"><path d="M17 7V5.500L15.400 3.500H3.500L2.700 5v11c0 .4.300.7.700.7h13c.4 0 .7-.3.7-.7V7H3.500M17 8.900h-4.300c-2.500 0-2.500 4.300 0 4.300H17Z" /><path d="M4 5.200h12" stroke="#a5a4aa" strokeWidth="2.4" /></Glyph>
      <Glyph viewBox="0 0 20 20"><path d="M9 2.700c.8 4 1.800 5.400 6.800 6.600-4.500 1.200-5.800 2.300-6.800 6.800-1-4.500-2.300-5.600-6.400-6.800C6.800 8.100 8 7 9 2.700ZM15.500 13v4.400M13.300 15.200h4.400" /></Glyph>
      <Glyph viewBox="0 0 20 20">
        <defs><linearGradient id="avatar" x1="0.2" y1="0" x2="0.8" y2="1"><stop offset="0" stopColor="#f5306d" /><stop offset="0.5" stopColor="#a044b0" /><stop offset="1" stopColor="#3b5fe0" /></linearGradient></defs>
        <circle cx="10" cy="10" r="8" fill="url(#avatar)" stroke="none" />
        <path d="M3.200 12.500 10 7.300 14.500 4M5.500 5.600 17.200 8.700M2.800 7.800 8 6.200" stroke="#f7d9ee" strokeWidth="0.9" />
      </Glyph>
      <Glyph viewBox="0 0 20 20"><path strokeWidth="1.5" d="M2.800 4.800h14.400M2.800 10h14.400M2.800 15.200h14.400" /></Glyph>
    </IconGroup>
  </BrowserBar>
);

export default function App() {
  return (
    <Screen>
      <GlobalStyle />
      <Chrome />
      <Header>
        <HeaderInner>
          <Brand>Finder</Brand>
          <HeaderActions>
            <HeaderButton>Logout</HeaderButton>
            <HeaderButton $primary>Manage Users</HeaderButton>
          </HeaderActions>
        </HeaderInner>
      </Header>
      <Main>
        <Welcome>Welcome admin1!</Welcome>
        <SearchInput placeholder="Search for a location..." />
        <AddButton>Add Location</AddButton>
        <MapCard>
          <EastAfricaMap />
          <ZoomControl>
            <ZoomButton aria-label="Zoom in"><svg width="12" height="12"><path d="M6 .5v11M.5 6h11" /></svg></ZoomButton>
            <ZoomButton aria-label="Zoom out"><svg width="12" height="12"><path d="M.5 6h11" /></svg></ZoomButton>
          </ZoomControl>
          <Attribution>
            <svg width="11" height="8"><path d="M0 0h11v4H0Z" fill="#4c7be1" /><path d="M0 4h11v3.500H0Z" fill="#ffd500" /></svg>
            <a>Leaflet</a> | © OpenStreetMap contributors
          </Attribution>
        </MapCard>
      </Main>
      <Footer>© 2025 Finder. All rights reserved.</Footer>
    </Screen>
  );
}
